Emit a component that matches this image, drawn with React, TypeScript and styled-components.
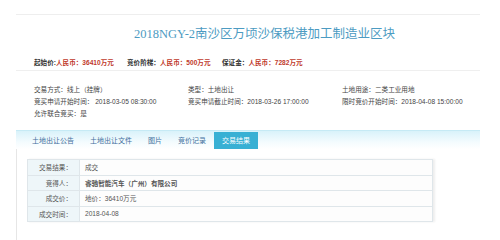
import React from 'react';
import styled, { createGlobalStyle } from 'styled-components';

const GlobalStyle = createGlobalStyle`
  html, body {
    margin: 0;
    padding: 0;
    background: #fff;
  }
  body {
    font-family: 'Liberation Sans', 'Noto Sans CJK SC', sans-serif;
  }
`;

const prices = [
  { label: '起始价:', value: '人民币：36410万元', width: 93 },
  { label: '竞价阶梯：', value: '人民币：500万元', width: 95 },
  { label: '保证金：', value: '人民币：7282万元', width: 120 },
];

const infos = [
  '交易方式：线上（挂牌）',
  '类型：土地出让',
  '土地用途：二类工业用地',
  '竞买申请开始时间： 2018-03-05 08:30:00',
  '竞买申请截止时间：2018-03-26 17:00:00',
  '限时竞价开始时间：2018-04-08 15:00:00',
  '允许联合竞买：是',
];

const tabs = ['土地出让公告', '土地出让文件', '图片', '竞价记录', '交易结果'];

const results = [
  { label: '交易结果：', value: '成交' },
  { label: '竞得人：', value: '睿驰智能汽车（广州）有限公司', strong: true },
  { label: '成交价：', value: '地价：36410万元' },
  { label: '成交时间：', value: '2018-04-08' },
];

const App = () => {
  return (
    <Page>
      <GlobalStyle />
      <Frame>
        <Title>2018NGY-2南沙区万顷沙保税港加工制造业区块</Title>
        <PriceRow>
          {prices.map((p) => (
            <PriceItem key={p.label} $width={p.width}>
              {p.label}
              <span>{p.value}</span>
            </PriceItem>
          ))}
        </PriceRow>
        <InfoGrid>
          {infos.map((text) => (
            <Info key={text}>{text}</Info>
          ))}
        </InfoGrid>
        <TabBar>
          {tabs.map((t, i) => (
            <Tab key={t} $active={i === tabs.length - 1}>
              {t}
            </Tab>
          ))}
        </TabBar>
        <Panel>
          <Table>
            <tbody>
              {results.map((r) => (
                <tr key={r.label}>
                  <LabelCell>{r.label}</LabelCell>
                  <ValueCell $strong={r.strong}>{r.value}</ValueCell>
                </tr>
              ))}
            </tbody>
          </Table>
        </Panel>
      </Frame>
    </Page>
  );
};

export default App;

const Page = styled.div`
  width: 500px;
  height: 240px;
  overflow: hidden;
  padding: 14px 0 0 16px;
  box-sizing: border-box;
`;

const Frame = styled.div`
  width: 464px;
  border-top: 1px solid #eeeeee;
`;

const Title = styled.div`
  height: 38px;
  line-height: 38px;
  padding-left: 33px;
  text-align: center;
  font-family: 'Liberation Serif', 'Noto Sans CJK SC', serif;
  font-size: 12.5px;
  color: #4c9bc2;
  white-space: nowrap;
`;

const PriceRow = styled.div`
  display: flex;
  height: 17px;
  align-items: center;
  padding-left: 18px;
  border-bottom: 1px solid #efefef;
`;

const PriceItem = styled.div<{ $width: number }>`
  width: ${(p) => p.$width}px;
  font-size: 6.6px;
  font-weight: 700;
  color: #333;
  white-space: nowrap;
  span {
    color: #c0392b;
  }
`;

const InfoGrid = styled.div`
  display: grid;
  grid-template-columns: 154px 154px auto;
  grid-auto-rows: 12px;
  align-items: center;
  padding: 12px 0 0 18px;
`;

const Info = styled.div`
  font-size: 6.6px;
  color: #444;
  white-space: nowrap;
`;

const TabBar = styled.div`
  display: flex;
  align-items: flex-end;
  height: 19px;
  margin-top: 11px;
  padding-left: 8px;
  border-top: 1px solid #c6eaf5;
  background: linear-gradient(to bottom, #d9f2fa 0%, #f3fbfe 60%, #ffffff 100%);
  box-sizing: border-box;
`;

const Tab = styled.div<{ $active?: boolean }>`
  height: 17px;
  line-height: 17px;
  padding: 0 8px;
  font-size: 7px;
  color: ${(p) => (p.$active ? '#ffffff' : '#3f6f9c')};
  background: ${(p) => (p.$active ? '#38b0d4' : 'transparent')};
  white-space: nowrap;
`;

const Panel = styled.div`
  border-left: 1px solid #e6e6e6;
  padding: 10px 0 30px 10px;
`;

const Table = styled.table`
  width: 406px;
  border-collapse: collapse;
  box-shadow: 2px 0 2px #eeeeee;
  td {
    height: 14.5px;
    border: 1px solid #dfe6ea;
    font-size: 6.6px;
    padding: 0;
    white-space: nowrap;
  }
`;

const LabelCell = styled.td`
  width: 44px;
  padding-right: 7px !important;
  text-align: right;
  background: #eef6f9;
  color: #555;
`;

const ValueCell = styled.td<{ $strong?: boolean }>`
  padding-left: 5px !important;
  color: #555;
  font-weight: ${(p) => (p.$strong ? 700 : 400)};
  background: #fdfdfd;
`;
